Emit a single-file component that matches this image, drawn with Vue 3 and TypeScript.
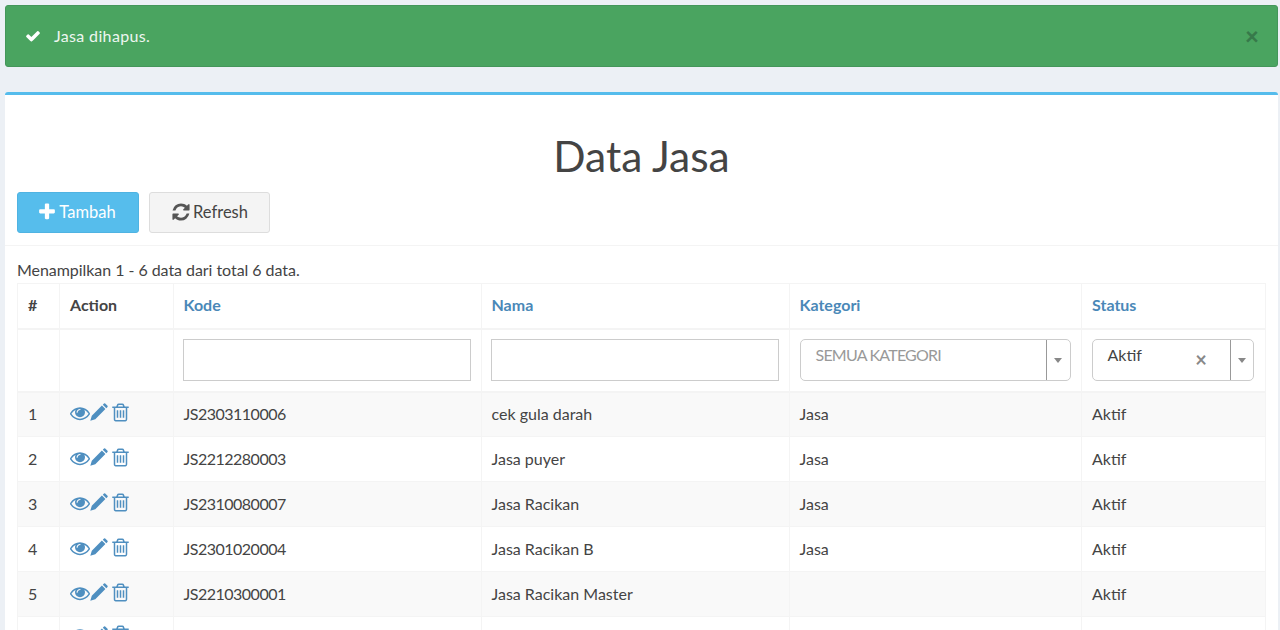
<script setup lang="ts">
const icons: Record<string, string> = {
  check: 'M1671 566q0 40-28 68l-724 724-136 136q-28 28-68 28t-68-28l-136-136-362-362q-28-28-28-68t28-68l136-136q28-28 68-28t68 28l294 295 656-657q28-28 68-28t68 28l136 136q28 28 28 68z',
  plus: 'M1600 736v192q0 40-28 68t-68 28h-416v416q0 40-28 68t-68 28h-192q-40 0-68-28t-28-68v-416h-416q-40 0-68-28t-28-68v-192q0-40 28-68t68-28h416v-416q0-40 28-68t68-28h192q40 0 68 28t28 68v416h416q40 0 68 28t28 68z',
  refresh: 'M1639 1056q0 5-1 7-64 268-268 434.500t-478 166.500q-146 0-282.500-55t-243.500-157l-129 129q-19 19-45 19t-45-19-19-45v-448q0-26 19-45t45-19h448q26 0 45 19t19 45-19 45l-137 137q71 66 161 102t187 36q134 0 250-65t186-179q11-17 53-117 8-23 30-23h192q13 0 22.500 9.500t9.500 22.500zm25-800v448q0 26-19 45t-45 19h-448q-26 0-45-19t-19-45 19-45l138-138q-148-137-349-137-134 0-250 65t-186 179q-11 17-53 117-8 23-30 23h-199q-13 0-22.500-9.500t-9.500-22.500v-7q65-268 270-434.500t480-166.500q146 0 284 55.500t245 156.500l130-129q19-19 45-19t45 19 19 45z',
  eye: 'M1664 960q-152-236-381-353 61 104 61 225 0 185-131.500 316.500t-316.500 131.500-316.500-131.500-131.500-316.500q0-121 61-225-229 117-381 353 133 205 333.500 326.500t434.500 121.500 434.500-121.500 333.500-326.500zm-720-384q0-20-14-34t-34-14q-125 0-214.500 89.500t-89.500 214.500q0 20 14 34t34 14 34-14 14-34q0-86 61-147t147-61q20 0 34-14t14-34zm848 384q0 34-20 69-140 230-376.500 368.500t-499.500 138.500-499.500-139-376.500-368q-20-35-20-69t20-69q140-229 376.500-368t499.500-139 499.500 139 376.500 368q20 35 20 69z',
  pencil: 'M0.3 17.7 L1.8 12.7 L11.9 2.6 L15.4 6.1 L5.3 16.2 Z M12.8 1.7 L14 0.5 Q14.6 0 15.2 0.5 L17.5 2.8 Q18 3.4 17.5 4 L16.3 5.2 Z',
  trash: 'M704 736v576q0 14-9 23t-23 9h-64q-14 0-23-9t-9-23v-576q0-14 9-23t23-9h64q14 0 23 9t9 23zm256 0v576q0 14-9 23t-23 9h-64q-14 0-23-9t-9-23v-576q0-14 9-23t23-9h64q14 0 23 9t9 23zm256 0v576q0 14-9 23t-23 9h-64q-14 0-23-9t-9-23v-576q0-14 9-23t23-9h64q14 0 23 9t9 23zm128 724v-948h-896v948q0 22 7 40.500t14.500 27 10.500 8.500h832q3 0 10.500-8.500t14.500-27 7-40.500zm-672-1076h448l-48-117q-7-9-17-11h-317q-10 2-17 11zm928 32v64q0 14-9 23t-23 9h-96v948q0 83-47 143.500t-113 60.500h-832q-66 0-113-58.500t-47-141.500v-952h-96q-14 0-23-9t-9-23v-64q0-14 9-23t23-9h309l70-167q15-37 54-63t79-26h320q40 0 79 26t54 63l70 167h309q14 0 23 9t9 23z'
}
const rows = [
  { no: 1, kode: 'JS2303110006', nama: 'cek gula darah', kategori: 'Jasa', status: 'Aktif' },
  { no: 2, kode: 'JS2212280003', nama: 'Jasa puyer', kategori: 'Jasa', status: 'Aktif' },
  { no: 3, kode: 'JS2310080007', nama: 'Jasa Racikan', kategori: 'Jasa', status: 'Aktif' },
  { no: 4, kode: 'JS2301020004', nama: 'Jasa Racikan B', kategori: 'Jasa', status: 'Aktif' },
  { no: 5, kode: 'JS2210300001', nama: 'Jasa Racikan Master', kategori: '', status: 'Aktif' }
]
</script>

<template>
  <div class="page">
    <div class="alert">
      <svg class="check" viewBox="0 0 1792 1792"><path :d="icons.check" /></svg>
      <span class="msg">Jasa dihapus.</span>
      <span class="close">×</span>
    </div>
    <section class="box">
      <h1>Data Jasa</h1>
      <div class="toolbar">
        <button class="btn info"><svg viewBox="0 0 1792 1792"><path :d="icons.plus" /></svg>Tambah</button>
        <button class="btn plain"><svg viewBox="0 0 1792 1792"><path :d="icons.refresh" /></svg>Refresh</button>
      </div>
      <div class="body">
        <div class="summary">Menampilkan 1 - 6 data dari total 6 data.</div>
        <table>
          <colgroup>
            <col style="width:42px" /><col style="width:113.5px" /><col style="width:308px" />
            <col style="width:308px" /><col style="width:292.5px" /><col style="width:184px" />
          </colgroup>
          <thead>
            <tr class="head">
              <th>#</th><th>Action</th>
              <th class="link">Kode</th><th class="link">Nama</th><th class="link">Kategori</th><th class="link">Status</th>
            </tr>
            <tr class="filters">
              <td></td><td></td>
              <td><input class="field" type="text" /></td>
              <td><input class="field" type="text" /></td>
              <td class="kat">
                <div class="select">
                  <span class="value muted">SEMUA KATEGORI</span>
                  <span class="caret"></span>
                </div>
              </td>
              <td class="last">
                <div class="select">
                  <span class="value">Aktif</span>
                  <span class="clear">×</span>
                  <span class="caret narrow"></span>
                </div>
              </td>
            </tr>
          </thead>
          <tbody>
            <tr v-for="r in rows" :key="r.no">
              <td>{{ r.no }}</td>
              <td>
                <div class="actions">
                  <svg class="i-eye" viewBox="0 0 1792 1792"><path :d="icons.eye" /></svg>
                  <svg class="i-pencil" viewBox="0 0 18 18"><path :d="icons.pencil" /></svg>
                  <svg class="i-trash" viewBox="0 0 1792 1792"><path :d="icons.trash" /></svg>
                </div>
              </td>
              <td class="code">{{ r.kode }}</td>
              <td>{{ r.nama }}</td>
              <td>{{ r.kategori }}</td>
              <td>{{ r.status }}</td>
            </tr>
            <tr class="cut">
              <td></td>
              <td>
                <div class="actions">
                  <svg class="i-eye" viewBox="0 0 1792 1792"><path :d="icons.eye" /></svg>
                  <svg class="i-pencil" viewBox="0 0 18 18"><path :d="icons.pencil" /></svg>
                  <svg class="i-trash" viewBox="0 0 1792 1792"><path :d="icons.trash" /></svg>
                </div>
              </td>
              <td></td><td></td><td></td><td></td>
            </tr>
          </tbody>
        </table>
      </div>
    </section>
  </div>
</template>

<style>
html, body { margin: 0; height: 630px; overflow: hidden; background: #ecf0f5; }
</style>

<style scoped>
.page {
  padding: 5px 2px 0 5px;
  font-family: "Lato", "Noto Sans", sans-serif;
  font-size: 16px;
  color: #444;
}
.alert {
  display: flex;
  align-items: center;
  height: 62px;
  box-sizing: border-box;
  padding: 0 19px 1px;
  background: #4aa460;
  border: 1px solid #44965a;
  border-radius: 3px;
  color: #eef6f0;
  margin-bottom: 25px;
}
.msg { letter-spacing: 0.35px; }
.check { width: 16px; height: 16px; fill: #fff; margin-right: 13px; }
.close { margin-left: auto; margin-right: -1px; font-size: 24px; font-weight: 900; color: #37794a; line-height: 1; }
.box {
  background: #fff;
  border-top: 3px solid #55bcec;
  border-radius: 3px;
  box-sizing: border-box;
  height: 600px;
}
h1 {
  margin: 0;
  padding-top: 35px;
  height: 97px;
  box-sizing: border-box;
  text-align: center;
  font-size: 42.5px;
  font-weight: 400;
  line-height: 52px;
  color: #444;
}
.toolbar {
  display: flex;
  gap: 10px;
  padding: 0 12px 12px;
  border-bottom: 1px solid #f4f4f4;
}
.btn {
  display: flex;
  align-items: center;
  justify-content: center;
  height: 41px;
  font: inherit;
  font-size: 16.5px;
  line-height: 20px;
  border-radius: 3px;
  padding: 0 0 2px;
}
.btn svg { width: 20px; height: 20px; margin-right: 2px; fill: currentColor; }
.info { width: 122px; background: #56bdec; border: 1px solid #4fb3e2; color: #fff; padding-right: 3px; }
.plain { width: 121px; background: #f4f4f4; border: 1px solid #ddd; color: #444; }
.plain svg { fill: #555; }
.body { padding: 13px 12px 0; }
.summary { height: 24px; line-height: 22px; letter-spacing: -0.05px; }
table {
  width: 1248px;
  table-layout: fixed;
  border-collapse: collapse;
  border: 1px solid #f4f4f4;
}
th, td { border: 1px solid #f4f4f4; padding: 0 10px; text-align: left; }
.head { height: 45px; }
.head th { border-bottom-width: 2px; font-weight: 700; padding-bottom: 2px; }
th.link { color: #4a88b8; }
.filters { height: 63px; }
.filters td { border-bottom-width: 2px; padding: 0 10px 1px 9.5px; }
.filters td.kat { padding-left: 10px; }
.filters td.last { padding-right: 11px; }
.field {
  display: block;
  width: 100%;
  height: 42px;
  box-sizing: border-box;
  border: 1px solid #ccc;
  background: #fff;
}
.select {
  display: flex;
  height: 42px;
  box-sizing: border-box;
  border: 1px solid #ccc;
  border-radius: 5px;
  background: #fff;
}
.value { padding: 4px 0 0 15px; flex: 1; line-height: 22px; white-space: nowrap; }
.muted { color: #999; letter-spacing: -0.78px; }
.clear { width: 30px; margin-right: 14px; font-size: 20px; line-height: 38px; color: #888; text-align: center; font-weight: 700; }
.caret {
  position: relative;
  flex: none;
  width: 23px;
  border-left: 1px solid #999;
}
.caret.narrow { width: 22px; }
.caret::after {
  content: "";
  position: absolute;
  left: 7px;
  top: 18px;
  border: 4px solid transparent;
  border-top: 5px solid #888;
  border-bottom: 0;
}
tbody tr { height: 45px; }
tbody td { padding-bottom: 2px; }
tbody tr:nth-child(odd) { background: #f9f9f9; }
.code { letter-spacing: -0.5px; }
.actions { display: flex; align-items: center; height: 24px; margin-top: -1px; color: #4f8fc0; }
.actions svg { fill: currentColor; flex: none; }
.i-eye { width: 20px; height: 20px; }
.i-pencil { width: 18px; height: 18px; margin-top: -1px; }
.i-trash { width: 21px; height: 21px; margin-left: 1.75px; margin-top: -1px; }
.cut td { vertical-align: top; }
.cut .actions { margin-top: 6px; }
</style>
